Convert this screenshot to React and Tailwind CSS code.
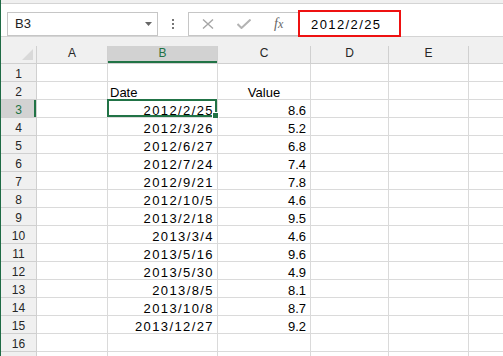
import React from "react";

const ROWS = [
    null,
    { b: "Date", c: "Value", head: true },
    { b: "2012/2/25", c: "8.6" },
    { b: "2012/3/26", c: "5.2" },
    { b: "2012/6/27", c: "6.8" },
    { b: "2012/7/24", c: "7.4" },
    { b: "2012/9/21", c: "7.8" },
    { b: "2012/10/5", c: "4.6" },
    { b: "2013/2/18", c: "9.5" },
    { b: "2013/3/4", c: "4.6" },
    { b: "2013/5/16", c: "9.6" },
    { b: "2013/5/30", c: "4.9" },
    { b: "2013/8/5", c: "8.1" },
    { b: "2013/10/8", c: "8.7" },
    { b: "2013/12/27", c: "9.2" },
    null,
    null,
];

const cell = "h-full shrink-0 border-r border-b border-[#dadada] text-[13px] leading-[14px] pt-[4px] text-black";

function Row({ n, data, label }) {
    const sel = n === 3;
    return (
        <div className="flex h-[18px]">
            <div
                className={`w-[36px] shrink-0 h-full border-r border-b border-[#d0d0d0] text-center text-[12px] leading-[14px] pt-[3px] ${
                    sel ? "bg-[#d2d2d2] text-[#217346] shadow-[inset_-2px_0_0_#217346]" : "bg-[#f0f0f0] text-[#262626]"
                }`}
            >
                {label && n}
            </div>
            <div className={`${cell} w-[71px]`} />
            <div className={`${cell} w-[110px] relative ${data?.head ? "pl-[2px]" : "text-right pr-[3px] tracking-[1.4px]"}`}>
                {data?.b}
                {sel && (
                    <>
                        <div className="absolute -left-[1px] -top-[1px] right-0 bottom-0 border-2 border-[#217346]" />
                        <div className="absolute -right-[2px] -bottom-[2px] w-[7px] h-[7px] bg-[#217346] border border-white" />
                    </>
                )}
            </div>
            <div className={`${cell} w-[93px] ${data?.head ? "text-center" : "text-right pr-[4px]"}`}>{data?.c}</div>
            <div className={`${cell} w-[78px]`} />
            <div className={`${cell} w-[80px]`} />
            <div className="h-full flex-1 border-b border-[#dadada]" />
        </div>
    );
}

export default function App() {
    const cols = [
        { l: "A", w: "w-[71px]" },
        { l: "B", w: "w-[110px]", sel: true },
        { l: "C", w: "w-[93px]" },
        { l: "D", w: "w-[78px]" },
        { l: "E", w: "w-[80px]" },
    ];

    return (
        <div className="w-[503px] h-[356px] overflow-hidden bg-white border-l border-[#1f6b45] font-['Liberation_Sans',sans-serif]">
            <div className="h-[4px] bg-[#f0f0f0] border-b border-[#d4d4d4]" />

            {/* formula bar */}
            <div className="h-[33px] border-b border-[#d4d4d4] flex items-start pt-[8px]">
                <div className="ml-[6px] w-[151px] h-[24px] border border-[#c6c6c6] flex items-center pl-[7px] pr-[5px]">
                    <span className="text-[13px] leading-[14px] text-[#222] flex-1">B3</span>
                    <svg width="7" height="4" viewBox="0 0 7 4">
                        <path d="M0 0h7L3.5 4z" fill="#666" />
                    </svg>
                </div>
                <div className="w-[30px] h-[24px] flex flex-col items-center justify-center gap-[2px]">
                    <span className="w-[2px] h-[2px] bg-[#777]" />
                    <span className="w-[2px] h-[2px] bg-[#777]" />
                    <span className="w-[2px] h-[2px] bg-[#777]" />
                </div>
                <div className="w-[110px] h-[24px] border border-r-0 border-[#c6c6c6] flex items-center">
                    <svg width="12" height="10" viewBox="0 0 12 10" className="ml-[13px]">
                        <path d="M1 0.5l10 9M11 0.5l-10 9" stroke="#a6a6a6" strokeWidth="1.4" />
                    </svg>
                    <svg width="14" height="10" viewBox="0 0 14 10" className="ml-[23px]">
                        <path d="M0.5 5l4 4 9-8.5" stroke="#b3b3b3" strokeWidth="2" fill="none" />
                    </svg>
                    <span className="ml-[23px] font-['Liberation_Serif',serif] italic text-[14px] leading-[14px] text-[#666]">
                        f<span className="text-[12px]">x</span>
                    </span>
                </div>
                <div className="relative flex-1 h-[24px] flex items-center pl-[13px] pt-[1px]">
                    <span className="text-[13px] leading-[14px] tracking-[1.4px] text-black">2012/2/25</span>
                    <div className="absolute -top-[2px] left-0 w-[103px] h-[27px] border-2 border-[#ee1111]" />
                </div>
            </div>

            <div className="h-[9px] bg-[#f0f0f0]" />

            {/* column headers */}
            <div className="flex h-[18px] bg-[#f0f0f0] border-b border-[#d0d0d0]">
                <div className="w-[36px] shrink-0 h-full border-r border-[#d0d0d0] relative">
                    <svg width="11" height="11" viewBox="0 0 11 11" className="absolute right-[3px] bottom-[3px]">
                        <path d="M11 0v11H0z" fill="#d9d9d9" />
                    </svg>
                </div>
                {cols.map((c) => (
                    <div
                        key={c.l}
                        className={`${c.w} shrink-0 h-full border-r border-[#d0d0d0] text-center text-[12px] leading-[14px] ${
                            c.sel ? "bg-[#d2d2d2] text-[#217346] shadow-[inset_0_-2px_0_#217346]" : "text-[#262626]"
                        }`}
                    >
                        {c.l}
                    </div>
                ))}
                <div className="flex-1" />
            </div>

            {ROWS.map((r, i) => (
                <Row key={i} n={i + 1} data={r} label={i < 16} />
            ))}
        </div>
    );
}
